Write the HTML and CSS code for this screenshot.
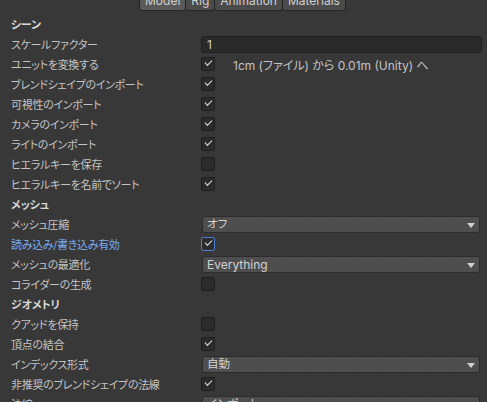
FILE: index.html
```html
<!DOCTYPE html>
<html lang="ja">
<head>
<meta charset="utf-8">
<title>Import Settings</title>
<link rel="stylesheet" href="styles.css">
</head>
<body>
<div class="tabs">
  <div class="tab active">Model</div>
  <div class="tab">Rig</div>
  <div class="tab">Animation</div>
  <div class="tab">Materials</div>
</div>
<div class="panel">
  <div class="row header">シーン</div>
  <div class="row"><span class="label">スケールファクター</span><div class="field">1</div></div>
  <div class="row"><span class="label">ユニットを変換する</span><span class="check on"></span><span class="note">1cm (ファイル) から 0.01m (Unity) へ</span></div>
  <div class="row"><span class="label">ブレンドシェイプのインポート</span><span class="check on"></span></div>
  <div class="row"><span class="label">可視性のインポート</span><span class="check on"></span></div>
  <div class="row"><span class="label">カメラのインポート</span><span class="check on"></span></div>
  <div class="row"><span class="label">ライトのインポート</span><span class="check on"></span></div>
  <div class="row"><span class="label">ヒエラルキーを保存</span><span class="check"></span></div>
  <div class="row"><span class="label">ヒエラルキーを名前でソート</span><span class="check on"></span></div>
  <div class="row header">メッシュ</div>
  <div class="row"><span class="label">メッシュ圧縮</span><div class="dropdown jp">オフ</div></div>
  <div class="row"><span class="label focus">読み込み/書き込み有効</span><span class="check on focused"></span></div>
  <div class="row"><span class="label">メッシュの最適化</span><div class="dropdown">Everything</div></div>
  <div class="row"><span class="label">コライダーの生成</span><span class="check"></span></div>
  <div class="row header">ジオメトリ</div>
  <div class="row"><span class="label">クアッドを保持</span><span class="check"></span></div>
  <div class="row"><span class="label">頂点の結合</span><span class="check on"></span></div>
  <div class="row"><span class="label">インデックス形式</span><div class="dropdown jp">自動</div></div>
  <div class="row"><span class="label">非推奨のブレンドシェイプの法線</span><span class="check on"></span></div>
  <div class="row"><span class="label">法線</span><div class="dropdown jp">インポート</div></div>
</div>
</body>
</html>
```
FILE: styles.css
```css
html, body {
  margin: 0;
  padding: 0;
  background: #383838;
  height: 100%;
  overflow: hidden;
}
body {
  font-family: Inter, "Noto Sans", "Noto Sans CJK JP", sans-serif;
  font-size: 12px;
  color: #c4c4c4;
  font-feature-settings: "palt";
}
.tabs {
  display: flex;
  margin-left: 139px;
  margin-top: -9px;
  height: 19px;
}
.tab {
  height: 18px;
  line-height: 18px;
  padding: 0 5px;
  background: #4b4b4b;
  border: 1px solid #242424;
  border-left: none;
  border-radius: 0 0 3px 3px;
  color: #d0d0d0;
  font-size: 12px;
}
.tab:first-child { border-left: 1px solid #242424; }
.tab.active { background: #5a5a5a; }
.panel {
  padding: 4px 5px 0 11px;
  display: flex;
  flex-direction: column;
}
.row {
  height: 20px;
  display: flex;
  align-items: center;
  flex-shrink: 0;
  white-space: nowrap;
}
.row.header {
  font-weight: bold;
  color: #d6d6d6;
  font-size: 11px;
  letter-spacing: -0.2px;
}
.label {
  width: 190px;
  flex-shrink: 0;
  font-size: 11px;
  letter-spacing: -0.3px;
}
.label.focus { color: #7aaaf0; }
.field {
  width: 275px;
  height: 15px;
  line-height: 15px;
  background: #2a2a2a;
  border: 1px solid #202020;
  border-radius: 3px;
  padding-left: 5px;
  color: #d2d2d2;
}
.check {
  width: 12px;
  height: 12px;
  background: #2b2b2b;
  border: 1px solid #1d1d1d;
  border-radius: 2px;
  position: relative;
  flex-shrink: 0;
}
.check.on::after {
  content: "";
  position: absolute;
  left: 3px;
  top: 2px;
  width: 6px;
  height: 3px;
  border-left: 1.4px solid #e2e2e2;
  border-bottom: 1.4px solid #e2e2e2;
  transform: rotate(-45deg);
  transform-origin: center;
}
.check.focused { border-color: #4b7ad0; }
.note {
  margin-left: 18px;
  color: #c4c4c4;
}
.dropdown {
  width: 272px;
  height: 15px;
  line-height: 15px;
  margin-left: 1px;
  background-color: #4d4d4d;
  background-image: radial-gradient(#555 0.6px, transparent 0.8px);
  background-size: 3px 3px;
  border: 1px solid #2c2c2c;
  border-radius: 3px;
  padding-left: 4px;
  color: #d2d2d2;
  position: relative;
}
.dropdown.jp { font-size: 11.5px; }
.dropdown::after {
  content: "";
  position: absolute;
  right: 4px;
  top: 6px;
  border-left: 4px solid transparent;
  border-right: 4px solid transparent;
  border-top: 5px solid #d0d0d0;
}
```
